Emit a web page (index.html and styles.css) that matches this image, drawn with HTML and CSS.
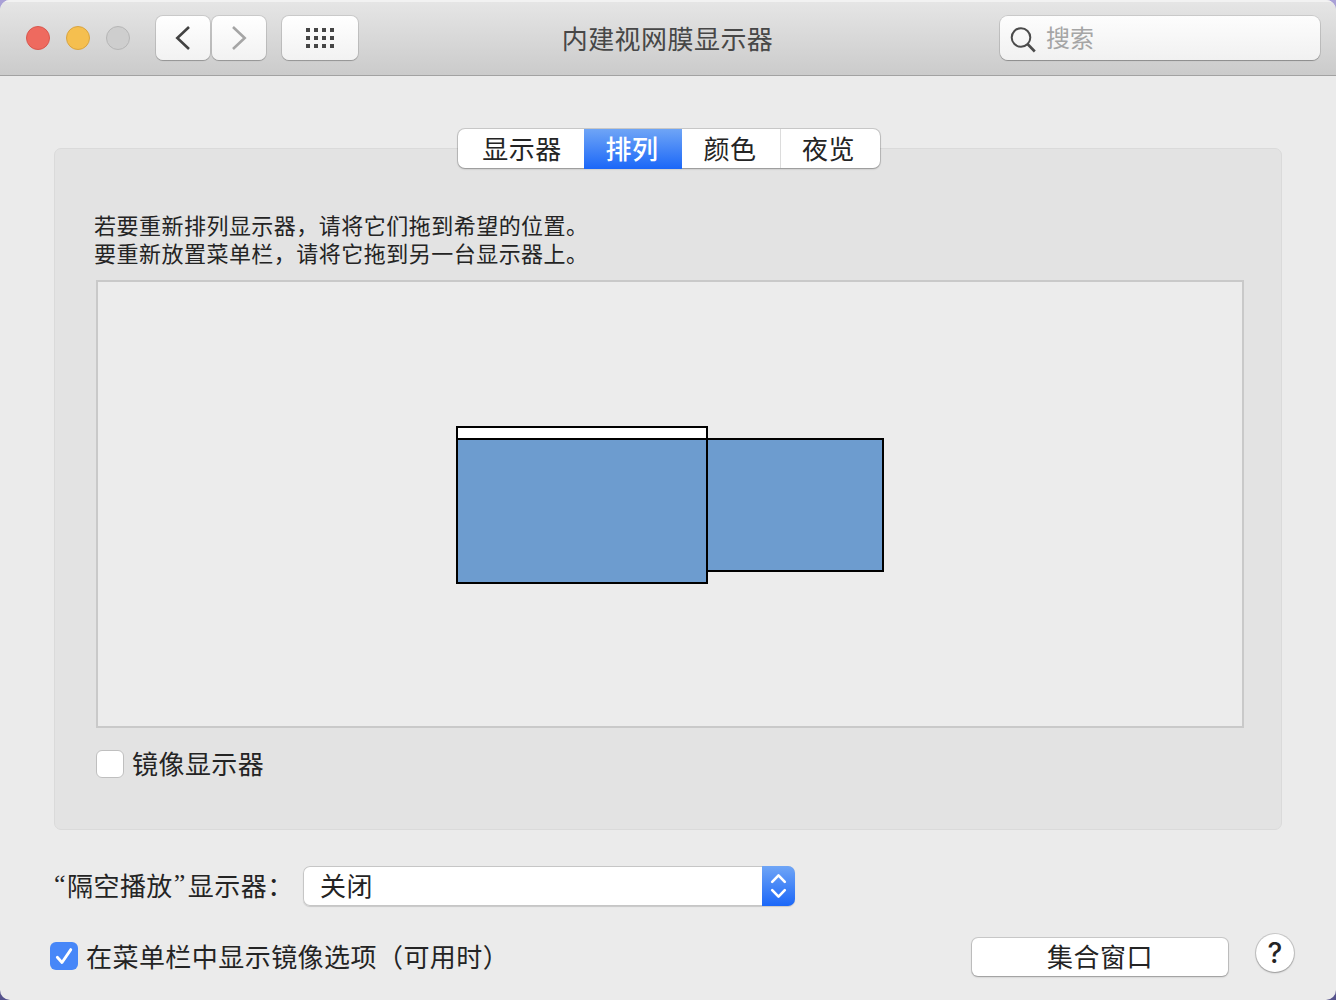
FILE: index.html
```
<!DOCTYPE html>
<html lang="zh-CN">
<head>
    <meta charset="UTF-8">
    <meta name="viewport" content="width=device-width, initial-scale=1.0">
    <title>内建视网膜显示器</title>
    <link rel="stylesheet" href="styles.css">
</head>
<body>
    <div class="window">
        <header class="titlebar">
            <div class="left">
                <div class="lights">
                    <span class="light close"></span>
                    <span class="light minimize"></span>
                    <span class="light zoom"></span>
                </div>
                <div class="nav">
                    <button class="tool" type="button">
                        <svg width="54" height="44" viewBox="0 0 54 44"><path d="M33 11L21.3 22 33 33" fill="none" stroke="#424242" stroke-width="2.6"/></svg>
                    </button>
                    <button class="tool" type="button">
                        <svg width="54" height="44" viewBox="0 0 54 44"><path d="M21 11L32.7 22 21 33" fill="none" stroke="#a5a5a5" stroke-width="2.6"/></svg>
                    </button>
                </div>
                <button class="tool grid" type="button">
                    <svg width="76" height="44" viewBox="0 0 76 44"><path d="M24 14h30M24 22h30M24 30h30" fill="none" stroke="#454545" stroke-width="4" stroke-dasharray="4 4"/></svg>
                </button>
            </div>
            <h1 class="title">内建视网膜显示器</h1>
            <div class="search">
                <svg width="26" height="26" viewBox="0 0 26 26"><g fill="none" stroke="#4b4b4b" stroke-width="2"><circle cx="11" cy="10.5" r="9.3"/><path d="M17.5 17l7.3 7.5" stroke-width="2.6"/></g></svg>
                <span>搜索</span>
            </div>
        </header>

        <main class="content">
            <nav class="tabs">
                <span class="tab wide">显示器</span>
                <span class="tab active">排列</span>
                <span class="tab">颜色</span>
                <span class="tab last">夜览</span>
            </nav>
            <section class="panel">
                <div class="hint">
                    <p>若要重新排列显示器，请将它们拖到希望的位置。</p>
                    <p>要重新放置菜单栏，请将它拖到另一台显示器上。</p>
                </div>
                <div class="arrangement">
                    <div class="display second"></div>
                    <div class="display main"><div class="menubar"></div></div>
                </div>
                <label class="check"><span class="box"></span>镜像显示器</label>
            </section>

            <div class="airplay">
                <span class="label"><span class="quote">“</span>隔空播放<span class="quote end">”</span>显示器：</span>
                <div class="select">
                    <span class="value">关闭</span>
                    <span class="arrows">
                        <svg width="33" height="40" viewBox="0 0 33 40"><path d="M10.2 15.8l6.3-6.4 6.3 6.4M10.2 24.2l6.3 6.4 6.3-6.4" fill="none" stroke="#fff" stroke-width="2.6" stroke-linecap="round" stroke-linejoin="round"/></svg>
                    </span>
                </div>
            </div>

            <footer class="footer">
                <label class="check">
                    <span class="box checked">
                        <svg width="28" height="28" viewBox="0 0 28 28"><path d="M7.3 15.2l4.7 5.3L20.8 7.6" fill="none" stroke="#fff" stroke-width="2.8" stroke-linecap="round" stroke-linejoin="round"/></svg>
                    </span>在菜单栏中显示镜像选项（可用时）
                </label>
                <div class="actions">
                    <button class="gather" type="button">集合窗口</button>
                    <button class="help" type="button">?</button>
                </div>
            </footer>
        </main>
    </div>
</body>
</html>
```
FILE: styles.css
```
* {
    box-sizing: border-box;
}
body, html {
    margin: 0;
    padding: 0;
    overflow: hidden;
    width: 100%;
    height: 100%;
}
body {
    background: linear-gradient(#a9a0d6, #55528c);
    font-family: "Noto Sans CJK SC", sans-serif;
    font-size: 26px;
    letter-spacing: 0.45px;
    color: #242424;
}
svg {
    display: block;
}
button {
    padding: 0;
    border: none;
    font: inherit;
    letter-spacing: inherit;
    color: inherit;
}
.window {
    width: 1336px;
    height: 1000px;
    border-radius: 10px;
    overflow: hidden;
    background: #ebebeb;
}

/* title bar */
.titlebar {
    display: grid;
    grid-template-columns: 1fr auto 1fr;
    align-items: center;
    height: 76px;
    padding: 0 16px 0 26px;
    background: linear-gradient(#e6e6e6, #cbcbcb);
    border-bottom: 1px solid #a2a2a2;
    box-shadow: inset 0 2px 0 #f2f2f2;
}
.left, .lights, .nav {
    display: flex;
    align-items: center;
}
.lights {
    gap: 16px;
    margin-right: 26px;
}
.light {
    width: 24px;
    height: 24px;
    border-radius: 50%;
    border: 1px solid #d9574e;
}
.close {
    background: #ee6a5f;
}
.minimize {
    background: #f5bf4f;
    border-color: #d9a440;
}
.zoom {
    background: #cecece;
    border-color: #b6b6b6;
}
.nav {
    gap: 2px;
    margin-right: 16px;
}
.tool {
    width: 54px;
    height: 44px;
    border-radius: 7px;
    background: linear-gradient(#fff, #f2f2f2);
    box-shadow: 0 0 0 1px rgba(0, 0, 0, 0.1), 0 1px 1px rgba(0, 0, 0, 0.2);
}
.grid {
    width: 76px;
}
.title {
    margin: 0;
    padding-right: 11px;
    font-size: 26px;
    font-weight: 400;
    line-height: 38px;
    color: #474747;
}
.search {
    display: flex;
    align-items: center;
    justify-self: end;
    width: 320px;
    height: 44px;
    padding-left: 10px;
    border-radius: 8px;
    background: linear-gradient(#fdfdfd, #f1f1f1);
    box-shadow: 0 0 0 1px rgba(0, 0, 0, 0.1), 0 1px 1px rgba(0, 0, 0, 0.25);
    font-size: 24px;
    line-height: 36px;
    letter-spacing: 0;
    color: #a5a5a5;
}
.search svg {
    margin: 4px 10px 0 0;
}
.search span {
    padding-bottom: 2px;
}

/* content */
.content {
    padding: 53px 54px 0;
}
.tabs {
    position: relative;
    display: flex;
    width: 422px;
    height: 39px;
    margin: 0 0 -20px 404px;
    border-radius: 7px;
    background: #fff;
    box-shadow: 0 0 0 1px rgba(0, 0, 0, 0.14), 0 1px 2px rgba(0, 0, 0, 0.25);
    line-height: 37px;
    text-align: center;
}
.tab {
    width: 98px;
    padding-right: 2px;
}
.wide {
    width: 126px;
    padding: 0 0 0 2px;
}
.last {
    width: 100px;
    border-left: 1px solid #dcdcdc;
    padding-right: 4px;
}
.active {
    height: 40px;
    background: linear-gradient(#6fa5f6, #1b67f8);
    color: #fff;
    font-weight: 500;
}
.panel {
    height: 682px;
    padding: 61px 37px 0 41px;
    border: 1px solid #dadada;
    border-radius: 7px;
    background: #e3e3e3;
}
.hint {
    margin: 0 0 14px -2px;
    font-size: 22px;
    letter-spacing: 0.48px;
    line-height: 28px;
}
.hint p {
    margin: 0;
}
.arrangement {
    position: relative;
    height: 448px;
    border: 2px solid #c9c9c9;
    background: #ececec;
}
.display {
    position: absolute;
    border: 2px solid #000;
    background: #6d9ccf;
}
.main {
    left: 358px;
    top: 144px;
    width: 252px;
    height: 158px;
}
.second {
    left: 608px;
    top: 156px;
    width: 178px;
    height: 134px;
}
.menubar {
    height: 12px;
    border-bottom: 2px solid #000;
    background: #fff;
}
.check {
    display: flex;
    align-items: center;
    gap: 8px;
    line-height: 38px;
}
.box {
    width: 28px;
    height: 28px;
    border: 1px solid #bfbfbf;
    border-radius: 6px;
    background: #fff;
}
.panel .check {
    align-items: flex-start;
    height: 36px;
    margin-top: 18px;
    line-height: 34px;
}
.panel .box {
    margin-top: 4px;
}
.checked {
    border: none;
    background: #4787f8;
}

/* bottom rows */
.airplay {
    display: flex;
    height: 40px;
    margin-top: 36px;
    line-height: 38px;
}
.label {
    width: 249px;
    white-space: nowrap;
}
.quote {
    display: inline-block;
    width: 13px;
    font-family: "Liberation Serif", serif;
    line-height: 1;
    vertical-align: 4px;
}
.end {
    width: 15px;
    padding-left: 1px;
}
.select {
    display: flex;
    justify-content: space-between;
    width: 492px;
    height: 40px;
    border-radius: 7px;
    background: #fff;
    box-shadow: inset 0 0 0 1px #c6c6c6, 0 1px 1px rgba(0, 0, 0, 0.15);
}
.value {
    padding-left: 17px;
}
.arrows {
    width: 33px;
    border-radius: 0 7px 7px 0;
    background: linear-gradient(#6fa5f6, #1b67f8);
}
.footer {
    display: flex;
    justify-content: space-between;
    height: 46px;
    margin: 27px -13px 0 -4px;
}
.footer .check {
    height: 46px;
}
.actions {
    display: flex;
    gap: 28px;
}
.gather {
    width: 256px;
    height: 38px;
    margin-top: 5px;
    padding-bottom: 2px;
    border-radius: 6px;
    background: #fff;
    box-shadow: 0 0 0 1px rgba(0, 0, 0, 0.14), 0 1px 2px rgba(0, 0, 0, 0.25);
    line-height: 36px;
}
.help {
    width: 38px;
    height: 38px;
    margin: 1px 1px 0 0;
    border-radius: 50%;
    background: #fff;
    box-shadow: 0 0 0 1px rgba(0, 0, 0, 0.14), 0 1px 2px rgba(0, 0, 0, 0.25);
    font-family: Inter, sans-serif;
    font-size: 28px;
    font-weight: 500;
    line-height: 38px;
}
```
